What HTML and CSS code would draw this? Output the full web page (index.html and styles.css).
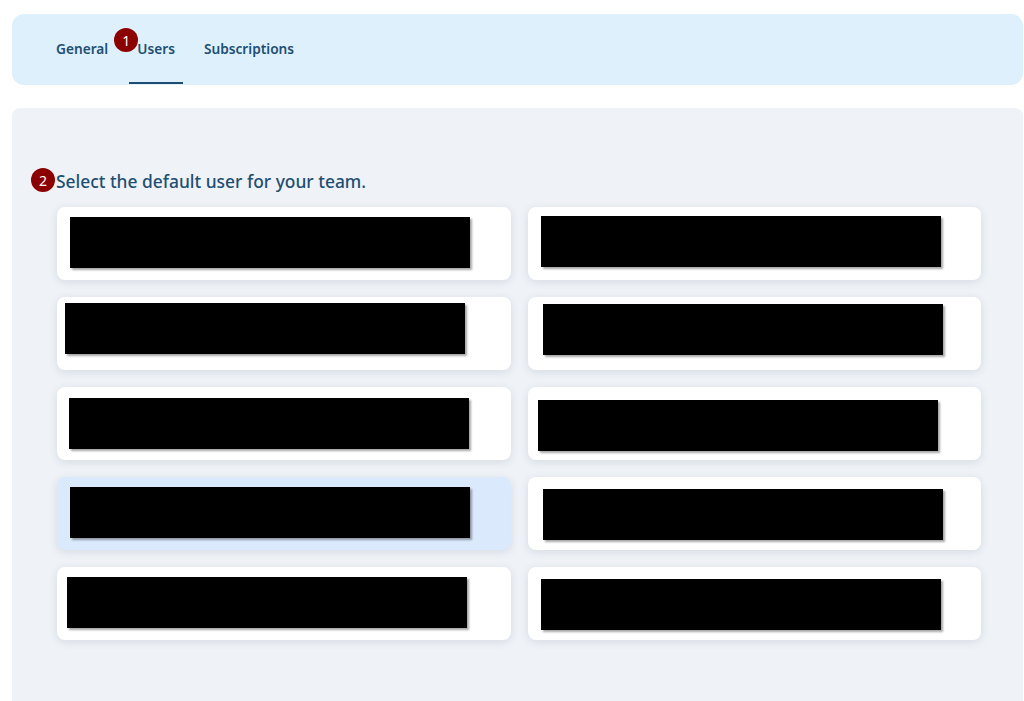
FILE: index.html
```html
<!DOCTYPE html>
<html lang="en">
<head>
    <meta charset="UTF-8">
    <meta name="viewport" content="width=device-width, initial-scale=1.0">
    <title>Team settings</title>
    <link rel="stylesheet" href="styles.css">
</head>
<body>
    <nav class="tabs">
        <a class="tab">General</a>
        <a class="tab active">Users<span class="step step-tab">1</span></a>
        <a class="tab">Subscriptions</a>
    </nav>

    <main class="panel">
        <h3 class="title"><span class="step step-title">2</span>Select the default user for your team.</h3>
        <ul class="users">
            <li class="user"><span class="redact at-13-10"></span></li>
            <li class="user"><span class="redact at-13-9"></span></li>
            <li class="user"><span class="redact at-8-6"></span></li>
            <li class="user"><span class="redact at-15-7"></span></li>
            <li class="user"><span class="redact at-12-11"></span></li>
            <li class="user"><span class="redact at-10-13"></span></li>
            <li class="user selected"><span class="redact at-13-10"></span></li>
            <li class="user"><span class="redact at-15-12"></span></li>
            <li class="user"><span class="redact at-10-10"></span></li>
            <li class="user"><span class="redact at-13-12"></span></li>
        </ul>
    </main>
</body>
</html>
```

FILE: styles.css
```css
body {
    margin: 0;
    padding: 14px 1px 0 12px;
    font-family: "Noto Sans", "Open Sans", sans-serif;
    background: #fff;
    overflow: hidden;
}
.tabs {
    display: flex;
    gap: 13px;
    height: 71px;
    padding-left: 36px;
    background: #dff0fd;
    border-radius: 12px;
    box-sizing: border-box;
}
.tab {
    position: relative;
    display: flex;
    align-items: center;
    padding: 0 8px;
    height: 69px;
    box-sizing: border-box;
    font-size: 13.7px;
    font-weight: 600;
    color: #1e4f72;
    cursor: pointer;
}
.tab.active {
    border-bottom: 2px solid #1e4f72;
    height: 70px;
}
.step {
    position: absolute;
    display: flex;
    align-items: center;
    justify-content: center;
    width: 24px;
    height: 24px;
    border-radius: 50%;
    background: #8b0000;
    color: #fff;
    font-size: 14px;
    font-weight: 400;
}
.step-tab {
    left: -15px;
    top: 14px;
}
.panel {
    margin-top: 23px;
    height: 610px;
    padding: 60px 42px 0 45px;
    box-sizing: border-box;
    background: #eff3f8;
    border-radius: 8px;
}
.title {
    position: relative;
    margin: 0 0 12px -1px;
    font-size: 17.4px;
    font-weight: 500;
    color: #1e4f72;
    line-height: 27px;
}
.step-title {
    left: -25px;
    top: 0;
}
.users {
    list-style: none;
    margin: 0;
    padding: 0;
    display: grid;
    grid-template-columns: 454px 453px;
    column-gap: 17px;
    row-gap: 17px;
}
.user {
    height: 73px;
    background: #fff;
    border-radius: 8px;
    box-shadow: 0 2px 9px rgba(60, 70, 90, 0.14);
    cursor: pointer;
}
.user.selected {
    background: #dbe9fc;
}
.redact {
    display: block;
    width: 400px;
    height: 51px;
    background: #000;
    box-shadow: 2px 2px 2px rgba(0, 0, 0, 0.35);
}
.at-13-10 { margin: 10px 0 0 13px; }
.at-13-9 { margin: 9px 0 0 13px; }
.at-8-6 { margin: 6px 0 0 8px; }
.at-15-7 { margin: 7px 0 0 15px; }
.at-12-11 { margin: 11px 0 0 12px; }
.at-10-13 { margin: 13px 0 0 10px; }
.at-15-12 { margin: 12px 0 0 15px; }
.at-10-10 { margin: 10px 0 0 10px; }
.at-13-12 { margin: 12px 0 0 13px; }
```
